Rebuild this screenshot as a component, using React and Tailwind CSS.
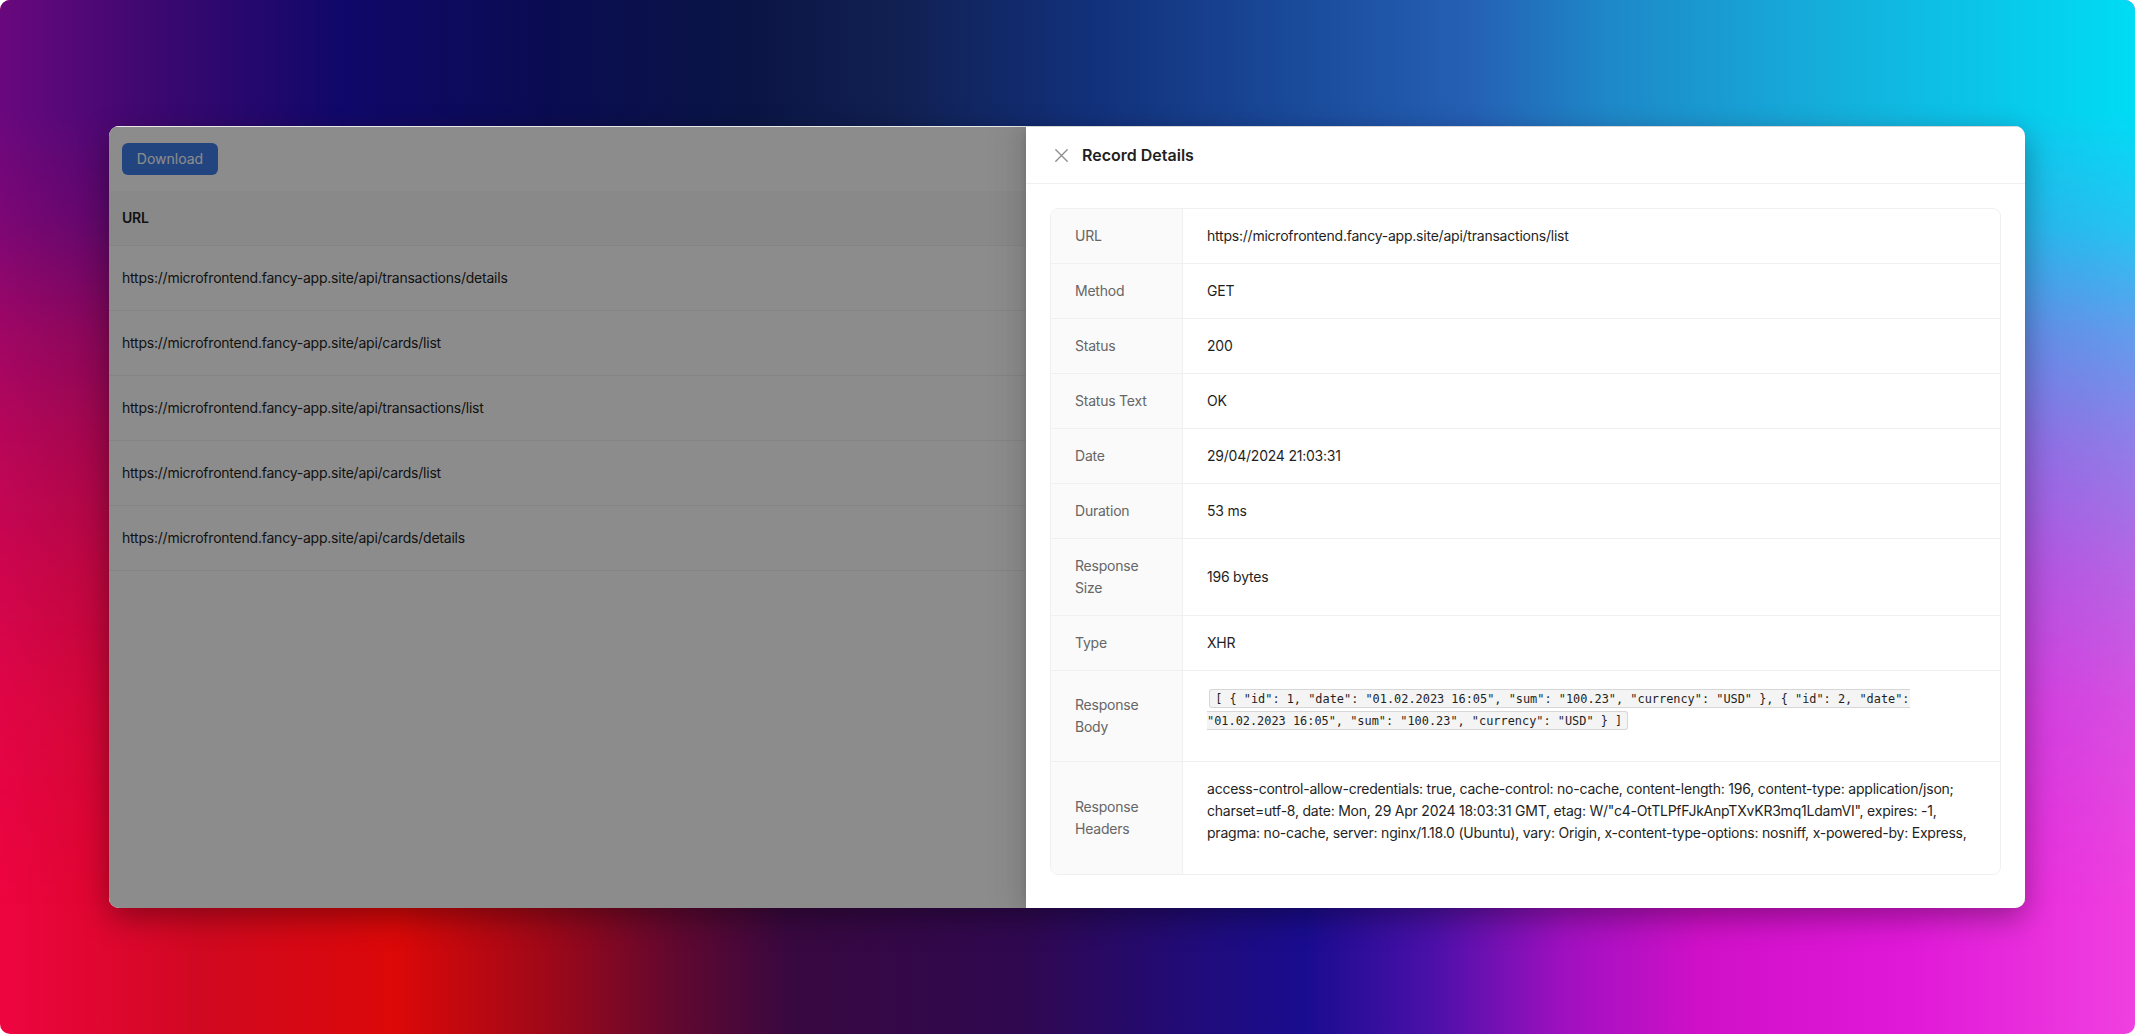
import React from "react";

const urls = [
  "https://microfrontend.fancy-app.site/api/transactions/details",
  "https://microfrontend.fancy-app.site/api/cards/list",
  "https://microfrontend.fancy-app.site/api/transactions/list",
  "https://microfrontend.fancy-app.site/api/cards/list",
  "https://microfrontend.fancy-app.site/api/cards/details",
];

const simpleRows = [
  ["URL", "https://microfrontend.fancy-app.site/api/transactions/list"],
  ["Method", "GET"],
  ["Status", "200"],
  ["Status Text", "OK"],
  ["Date", "29/04/2024 21:03:31"],
  ["Duration", "53 ms"],
  ["Response Size", "196 bytes"],
  ["Type", "XHR"],
];

const body =
  '[ { "id": 1, "date": "01.02.2023 16:05", "sum": "100.23", "currency": "USD" }, { "id": 2, "date": "01.02.2023 16:05", "sum": "100.23", "currency": "USD" } ]';

const headerLines = [
  "access-control-allow-credentials: true, cache-control: no-cache, content-length: 196, content-type: application/json;",
  'charset=utf-8, date: Mon, 29 Apr 2024 18:03:31 GMT, etag: W/"c4-OtTLPfFJkAnpTXvKR3mq1LdamVI", expires: -1,',
  "pragma: no-cache, server: nginx/1.18.0 (Ubuntu), vary: Origin, x-content-type-options: nosniff, x-powered-by: Express,",
];

function Row({ label, children, last }) {
  return (
    <div className={"flex " + (last ? "" : "border-b border-[#f0f0f0]")}>
      <div className="w-[132px] shrink-0 bg-[#fafafa] border-r border-[#f0f0f0] px-[24px] py-[16px] flex items-center text-[#666666]">
        {label}
      </div>
      <div className="flex-1 min-w-0 px-[24px] py-[16px] flex items-center text-[#1f1f1f]">
        {children}
      </div>
    </div>
  );
}

function CloseIcon() {
  return (
    <svg width="13" height="13" viewBox="0 0 13 13" fill="none">
      <path d="M0.8 0.8 L12.2 12.2 M12.2 0.8 L0.8 12.2" stroke="#8c8c8c" strokeWidth="1.3" strokeLinecap="round" />
    </svg>
  );
}

export default function App() {
  return (
    <div className="w-[2135px] h-[1034px] bg-white font-['Inter','Noto_Sans',sans-serif] text-[14px] leading-[22px] tracking-[-0.016em]">
      <div className="grid w-full h-full rounded-[10px] overflow-hidden">
        {/* bottom colour field */}
        <div className="[grid-area:1/1] bg-[linear-gradient(to_right,#ee0540_0%,#d00820_9.5%,#dc0808_18.5%,#a00818_25.5%,#600830_31.8%,#380840_37%,#300850_47.8%,#1e0c80_57.4%,#1a0c90_61.2%,#4a10a8_67%,#a010c0_73.3%,#d010c8_79.7%,#e018d8_89.3%,#f040e0_100%)]" />
        {/* top colour field fading downward */}
        <div className="[grid-area:1/1] bg-[linear-gradient(to_right,#6a087e_0%,#3a0870_7.6%,#10086a_16%,#0a0c52_25.5%,#0a1545_35%,#111f50_41.5%,#12307a_51%,#1a4a9a_60.6%,#2560b5_68.9%,#1e88c8_75.3%,#14b0dc_86%,#00dcf5_100%)] [mask-image:linear-gradient(to_bottom,#000_0%,#000_11%,rgba(0,0,0,0.85)_22%,rgba(0,0,0,0.6)_32%,rgba(0,0,0,0.4)_43%,rgba(0,0,0,0.24)_55%,rgba(0,0,0,0.1)_68%,rgba(0,0,0,0.03)_80%,transparent_88%)]" />
        {/* window */}
        <div className="[grid-area:1/1] self-center justify-self-start ml-[109px] relative z-10 w-[1916px] h-[782px] rounded-[10px] overflow-hidden bg-white shadow-[0_10px_30px_rgba(0,0,0,0.35)] flex flex-col">
          <div className="h-[1px] shrink-0 bg-[#e8e8e8]" />
          <div className="relative flex-1">
            {/* underlying app */}
            <div className="h-full bg-white">
              <div className="pt-[16px] pl-[13px]">
                <button className="w-[96px] h-[32px] rounded-[6px] bg-[#3f7fe8] text-white text-[14px] leading-[22px] tracking-normal">
                  Download
                </button>
              </div>
              <div className="mt-[16px]">
                <div className="h-[55px] bg-[#fafafa] border-b border-[#f0f0f0] flex items-center pl-[13px] font-semibold text-[#1f1f1f]">
                  URL
                </div>
                {urls.map((u, i) => (
                  <div key={i} className="h-[65px] border-b border-[#f0f0f0] flex items-center pl-[13px] text-[#1f1f1f]">
                    {u}
                  </div>
                ))}
              </div>
            </div>
            {/* mask */}
            <div className="absolute inset-0 bg-black/45" />
            {/* drawer */}
            <div className="absolute right-0 top-0 bottom-0 w-[999px] bg-white flex flex-col shadow-[-6px_0_16px_0_rgba(0,0,0,0.08),-3px_0_6px_-4px_rgba(0,0,0,0.12),-9px_0_28px_8px_rgba(0,0,0,0.05)]">
              <div className="h-[57px] shrink-0 border-b border-[#f0f0f0] flex items-center px-[24px]">
                <div className="w-[23px] h-[22px] flex items-center justify-center mr-[9px]">
                  <CloseIcon />
                </div>
                <div className="text-[16px] leading-[24px] font-semibold text-[#1f1f1f] tracking-normal">Record Details</div>
              </div>
              <div className="p-[24px]">
                <div className="border border-[#f0f0f0] rounded-[8px] overflow-hidden">
                  {simpleRows.map(([l, v]) => (
                    <Row key={l} label={l}>
                      {v}
                    </Row>
                  ))}
                  <Row label="Response Body">
                    <div className="mb-[14px]">
                      <code className="mx-[0.2em] px-[0.4em] pt-[0.2em] pb-[0.1em] text-[11.9px] leading-[14px] tracking-normal font-['DejaVu_Sans_Mono',monospace] bg-[rgba(150,150,150,0.1)] border border-[rgba(100,100,100,0.2)] rounded-[3px] text-[#1f1f1f]">
                        {body}
                      </code>
                    </div>
                  </Row>
                  <Row label="Response Headers" last>
                    <div className="mb-[14px] whitespace-nowrap">
                      {headerLines.map((l, i) => (
                        <div key={i}>{l}</div>
                      ))}
                    </div>
                  </Row>
                </div>
              </div>
            </div>
          </div>
        </div>
      </div>
    </div>
  );
}
